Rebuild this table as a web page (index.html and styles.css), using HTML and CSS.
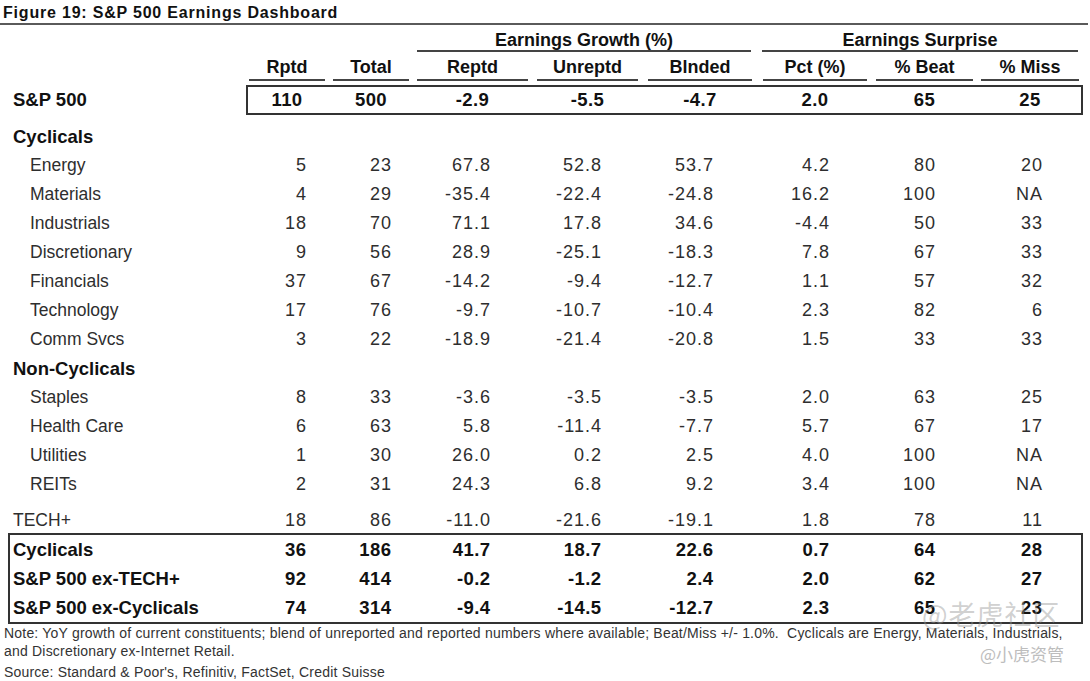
FILE: index.html
```html
<!DOCTYPE html>
<html lang="en">
<head>
<meta charset="utf-8">
<title>Figure 19: S&amp;P 500 Earnings Dashboard</title>
<link rel="stylesheet" href="styles.css">
</head>
<body>
<div class="page">
  <div class="title">Figure 19: S&amp;P 500 Earnings Dashboard</div>

  <div class="groups">
    <div class="grp">Earnings Growth (%)</div>
    <div class="grp">Earnings Surprise</div>
  </div>

  <div class="row head">
    <div class="lbl"></div>
    <div class="h c1">Rptd</div>
    <div class="h c2">Total</div>
    <div class="h c3">Reptd</div>
    <div class="h c4">Unreptd</div>
    <div class="h c5">Blnded</div>
    <div class="h c6">Pct (%)</div>
    <div class="h c7">% Beat</div>
    <div class="h c8">% Miss</div>
  </div>

  <div class="sp-row">
    <div class="sp-lbl">S&amp;P 500</div>
    <div class="sp-box">
      <div class="s c1">110</div>
      <div class="s c2">500</div>
      <div class="s c3">-2.9</div>
      <div class="s c4">-5.5</div>
      <div class="s c5">-4.7</div>
      <div class="s c6">2.0</div>
      <div class="s c7">65</div>
      <div class="s c8">25</div>
    </div>
  </div>

  <div class="row sec"><div class="lbl bold">Cyclicals</div></div>
  <div class="row"><div class="lbl ind">Energy</div><div class="n c1">5</div><div class="n c2">23</div><div class="n c3">67.8</div><div class="n c4">52.8</div><div class="n c5">53.7</div><div class="n c6">4.2</div><div class="n c7">80</div><div class="n c8">20</div></div>
  <div class="row"><div class="lbl ind">Materials</div><div class="n c1">4</div><div class="n c2">29</div><div class="n c3">-35.4</div><div class="n c4">-22.4</div><div class="n c5">-24.8</div><div class="n c6">16.2</div><div class="n c7">100</div><div class="n c8">NA</div></div>
  <div class="row"><div class="lbl ind">Industrials</div><div class="n c1">18</div><div class="n c2">70</div><div class="n c3">71.1</div><div class="n c4">17.8</div><div class="n c5">34.6</div><div class="n c6">-4.4</div><div class="n c7">50</div><div class="n c8">33</div></div>
  <div class="row"><div class="lbl ind">Discretionary</div><div class="n c1">9</div><div class="n c2">56</div><div class="n c3">28.9</div><div class="n c4">-25.1</div><div class="n c5">-18.3</div><div class="n c6">7.8</div><div class="n c7">67</div><div class="n c8">33</div></div>
  <div class="row"><div class="lbl ind">Financials</div><div class="n c1">37</div><div class="n c2">67</div><div class="n c3">-14.2</div><div class="n c4">-9.4</div><div class="n c5">-12.7</div><div class="n c6">1.1</div><div class="n c7">57</div><div class="n c8">32</div></div>
  <div class="row"><div class="lbl ind">Technology</div><div class="n c1">17</div><div class="n c2">76</div><div class="n c3">-9.7</div><div class="n c4">-10.7</div><div class="n c5">-10.4</div><div class="n c6">2.3</div><div class="n c7">82</div><div class="n c8">6</div></div>
  <div class="row"><div class="lbl ind">Comm Svcs</div><div class="n c1">3</div><div class="n c2">22</div><div class="n c3">-18.9</div><div class="n c4">-21.4</div><div class="n c5">-20.8</div><div class="n c6">1.5</div><div class="n c7">33</div><div class="n c8">33</div></div>

  <div class="row sec"><div class="lbl bold">Non-Cyclicals</div></div>
  <div class="row"><div class="lbl ind">Staples</div><div class="n c1">8</div><div class="n c2">33</div><div class="n c3">-3.6</div><div class="n c4">-3.5</div><div class="n c5">-3.5</div><div class="n c6">2.0</div><div class="n c7">63</div><div class="n c8">25</div></div>
  <div class="row"><div class="lbl ind">Health Care</div><div class="n c1">6</div><div class="n c2">63</div><div class="n c3">5.8</div><div class="n c4">-11.4</div><div class="n c5">-7.7</div><div class="n c6">5.7</div><div class="n c7">67</div><div class="n c8">17</div></div>
  <div class="row"><div class="lbl ind">Utilities</div><div class="n c1">1</div><div class="n c2">30</div><div class="n c3">26.0</div><div class="n c4">0.2</div><div class="n c5">2.5</div><div class="n c6">4.0</div><div class="n c7">100</div><div class="n c8">NA</div></div>
  <div class="row"><div class="lbl ind">REITs</div><div class="n c1">2</div><div class="n c2">31</div><div class="n c3">24.3</div><div class="n c4">6.8</div><div class="n c5">9.2</div><div class="n c6">3.4</div><div class="n c7">100</div><div class="n c8">NA</div></div>

  <div class="row tech"><div class="lbl">TECH+</div><div class="n c1">18</div><div class="n c2">86</div><div class="n c3">-11.0</div><div class="n c4">-21.6</div><div class="n c5">-19.1</div><div class="n c6">1.8</div><div class="n c7">78</div><div class="n c8">11</div></div>

  <div class="box">
    <div class="row brow"><div class="lbl">Cyclicals</div><div class="n c1">36</div><div class="n c2">186</div><div class="n c3">41.7</div><div class="n c4">18.7</div><div class="n c5">22.6</div><div class="n c6">0.7</div><div class="n c7">64</div><div class="n c8">28</div></div>
    <div class="row brow"><div class="lbl">S&amp;P 500 ex-TECH+</div><div class="n c1">92</div><div class="n c2">414</div><div class="n c3">-0.2</div><div class="n c4">-1.2</div><div class="n c5">2.4</div><div class="n c6">2.0</div><div class="n c7">62</div><div class="n c8">27</div></div>
    <div class="row brow"><div class="lbl">S&amp;P 500 ex-Cyclicals</div><div class="n c1">74</div><div class="n c2">314</div><div class="n c3">-9.4</div><div class="n c4">-14.5</div><div class="n c5">-12.7</div><div class="n c6">2.3</div><div class="n c7">65</div><div class="n c8">23</div></div>
  </div>

  <div class="notes">
    <div class="note">Note: YoY growth of current constituents; blend of unreported and reported numbers where available; Beat/Miss +/- 1.0%.&nbsp; Cyclicals are Energy, Materials, Industrials,</div>
    <div class="note">and Discretionary ex-Internet Retail.</div>
    <div class="note source">Source: Standard &amp; Poor's, Refinitiv, FactSet, Credit Suisse</div>
  </div>

  <div class="wm wm-main">@老虎社区</div>
  <div class="wm wm-sub">@小虎资管</div>
</div>
</body>
</html>
```

FILE: styles.css
```css
html, body {
  margin: 0;
  padding: 0;
  background: #ffffff;
}

.page {
  position: relative;
  width: 1090px;
  height: 681px;
  overflow: hidden;
  font-family: "Liberation Sans", Arial, Helvetica, sans-serif;
  color: #2e2e2e;
  --cols: 84px 84px 120px 111px 115px 113px 105px 98px;
}

.title {
  font-weight: 700;
  font-size: 16px;
  letter-spacing: 0.8px;
  line-height: 21px;
  padding: 2px 0 0 3px;
  color: #111;
  border-bottom: 2px solid #5a5a5a;
  margin-right: 2px;
}

.groups {
  display: grid;
  grid-template-columns: 334px 316px;
  column-gap: 11px;
  margin: 5px 0 0 417px;
}

.grp {
  font-weight: 700;
  font-size: 18px;
  line-height: 20px;
  text-align: center;
  color: #111;
  border-bottom: 2px solid #444;
}

.row {
  display: grid;
  grid-template-columns: 249px var(--cols);
  height: 29px;
  line-height: 29px;
  align-items: baseline;
  white-space: nowrap;
}

.row.head {
  height: auto;
  margin-top: 4px;
  line-height: 22px;
}

.h {
  font-weight: 700;
  font-size: 18px;
  text-align: center;
  color: #111;
  padding-bottom: 1px;
  border-bottom: 2px solid #444;
  margin-right: 8px;
}
.h.c3, .h.c6 { margin-right: 9px; }
.h.c4 { margin-right: 10px; }
.h.c5 { margin-right: 11px; }
.h.c8 { margin-right: 0; }

.sp-row {
  display: flex;
  margin-top: 4px;
  height: 30px;
  line-height: 30px;
  white-space: nowrap;
}

.sp-lbl {
  width: 246px;
  box-sizing: border-box;
  padding-left: 13px;
  font-weight: 700;
  font-size: 18.5px;
  color: #111;
}

.sp-box {
  display: grid;
  grid-template-columns: var(--cols);
  border: 2px solid #333;
  padding: 0 2px 0 1px;
  line-height: 26px;
}

.s {
  font-weight: 700;
  font-size: 18.5px;
  letter-spacing: 0.4px;
  text-align: center;
  color: #111;
  margin-right: 8px;
}
.s.c3, .s.c6 { margin-right: 9px; }
.s.c4 { margin-right: 10px; }
.s.c5 { margin-right: 11px; }
.s.c8 { margin-right: 0; }

.sp-row + .row.sec { margin-top: 7px; }

.lbl {
  font-size: 17.5px;
  padding-left: 13px;
}
.lbl.ind { padding-left: 30px; }
.lbl.bold {
  font-weight: 700;
  font-size: 18.5px;
  color: #111;
}

.n {
  font-size: 18px;
  letter-spacing: 1px;
  text-align: right;
}
.n.c1 { padding-right: 26px; }
.n.c2 { padding-right: 25px; }
.n.c3 { padding-right: 46px; }
.n.c4 { padding-right: 46px; }
.n.c5 { padding-right: 49px; }
.n.c6 { padding-right: 46px; }
.n.c7 { padding-right: 45px; }
.n.c8 { padding-right: 36px; }

.row.tech {
  margin-top: 8px;
  height: 26px;
  line-height: 26px;
}

.box {
  margin-left: 8px;
  width: 1075px;
  box-sizing: border-box;
  border: 2px solid #333;
}

.row.brow {
  grid-template-columns: 239px var(--cols);
  font-weight: 700;
  color: #111;
}
.row.brow .lbl {
  font-size: 18.5px;
  padding-left: 3px;
}
.row.brow .n {
  font-size: 18.5px;
  letter-spacing: 0.4px;
}
.row.brow .n.c1 { padding-right: 26.6px; }
.row.brow .n.c2 { padding-right: 25.6px; }
.row.brow .n.c3 { padding-right: 46.6px; }
.row.brow .n.c4 { padding-right: 46.6px; }
.row.brow .n.c5 { padding-right: 49.6px; }
.row.brow .n.c6 { padding-right: 46.6px; }
.row.brow .n.c7 { padding-right: 45.6px; }
.row.brow .n.c8 { padding-right: 36.6px; }

.notes {
  padding-left: 4px;
}

.note {
  font-size: 14px;
  letter-spacing: 0.2px;
  line-height: 18px;
  color: #333;
  white-space: nowrap;
}
.note.source { margin-top: 3px; }

.wm {
  position: absolute;
  font-family: "Noto Sans CJK SC", "Liberation Sans", sans-serif;
  white-space: nowrap;
}
.wm-main {
  left: 922px;
  top: 596px;
  font-size: 27px;
  letter-spacing: 1px;
  line-height: 36px;
  color: rgba(150, 150, 150, 0.45);
}
.wm-sub {
  left: 980px;
  top: 643px;
  font-size: 17px;
  line-height: 22px;
  color: #bdbdbd;
}
```
